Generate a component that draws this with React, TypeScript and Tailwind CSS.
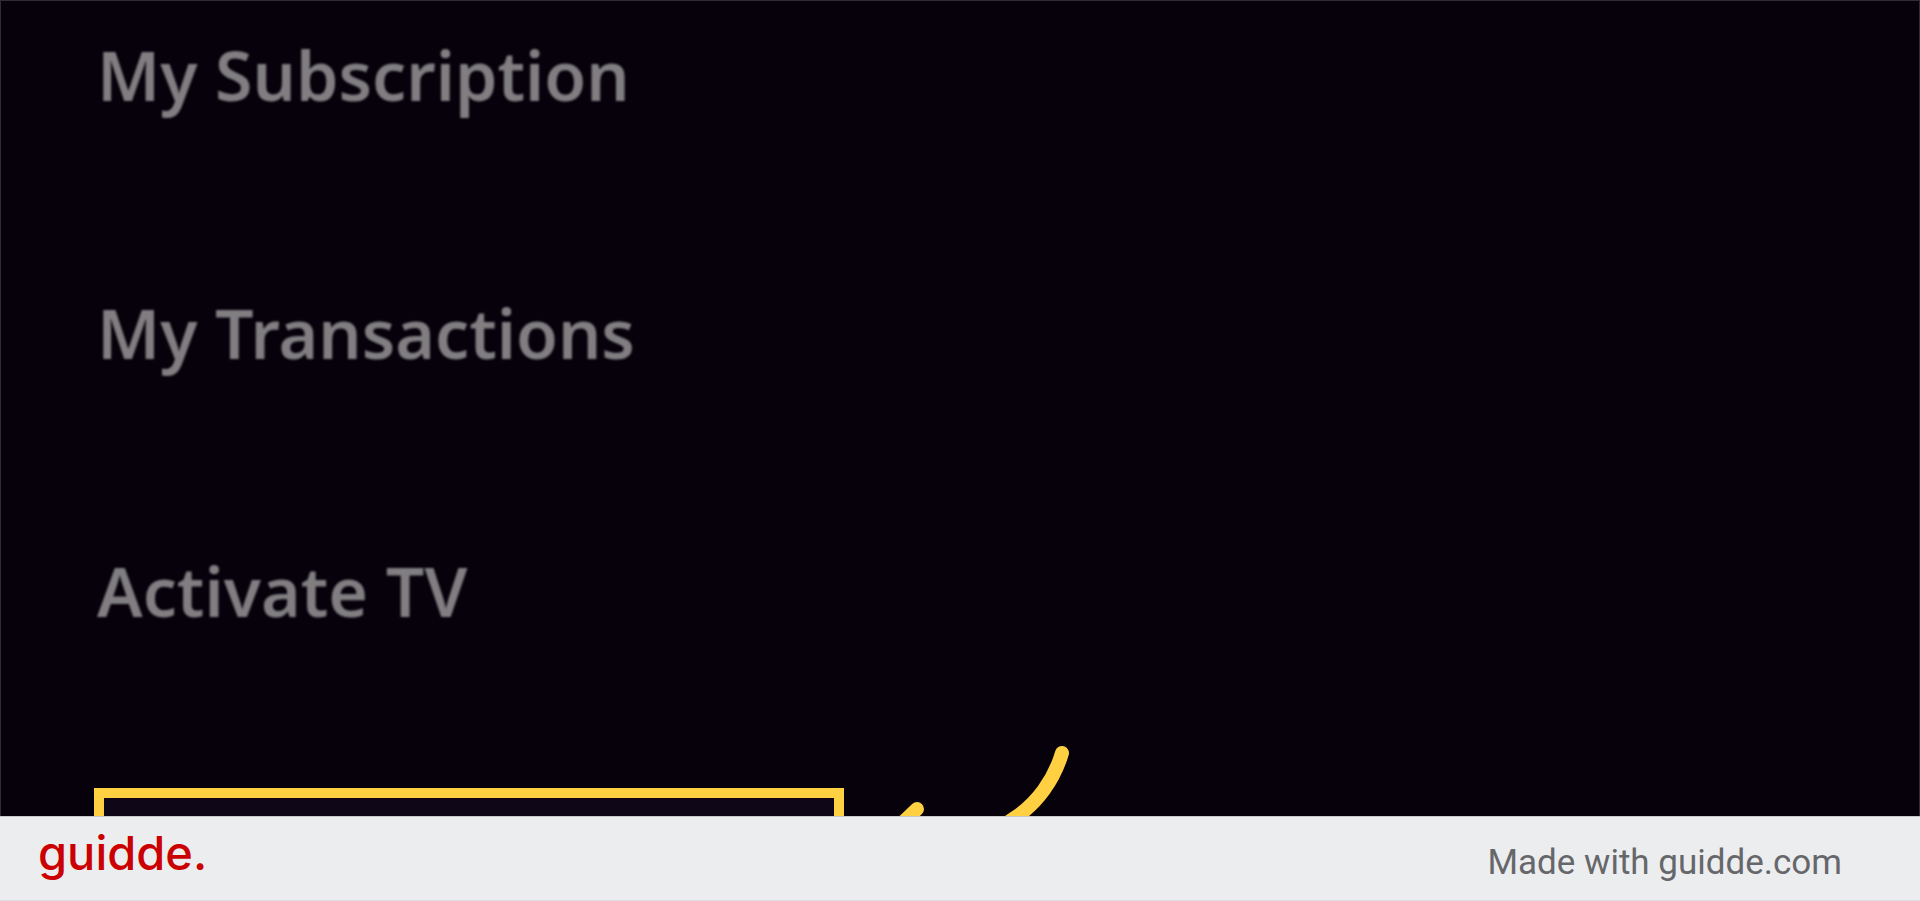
import React from 'react';

const menuItems = ['My Subscription', 'My Transactions', 'Activate TV'];

const HighlightArrow = () => (
  <svg className="-mt-[50px] h-[160px] w-[260px] shrink-0" viewBox="0 0 260 160" fill="none" stroke="#ffd142" strokeWidth="14" strokeLinecap="round" strokeLinejoin="round" aria-hidden="true">
    <path d="M218 15C210 42 193 65 172 79C146 98 96 117 24 118" />
    <path d="M73 71L24 118L76 154" />
  </svg>
);

const App: React.FC = () => {
  return (
    <div className="flex h-screen flex-col overflow-hidden bg-[#ecedef]">
      <main className="min-h-0 flex-1 overflow-hidden border-x border-t border-[#302c33] bg-[#07010c] pt-[26px]">
        <ul className="flex flex-col gap-[162px] pl-24 font-['Noto_Sans','Open_Sans',sans-serif] text-[68px] font-semibold leading-[96px] text-[#807e81] blur-[1px]">
          {menuItems.map(item => (
            <li key={item}>{item}</li>
          ))}
        </ul>

        <div className="mt-[149px] flex items-start pl-[93px]">
          <div className="h-[172px] w-[750px] shrink-0 border-10 border-[#ffd142] bg-[#0f0617]" />
          <HighlightArrow />
        </div>
      </main>

      <footer className="flex h-[85px] shrink-0 items-center justify-between border-y border-t-[#c9c8cc] border-b-[#dcdddf] bg-[#ecedef] pl-[38px] pr-[78px]">
        <span className="-mt-3 font-['Inter',sans-serif] text-[47px] font-medium leading-[60px] text-[#cb0000]">guidde.</span>
        <span className="mt-2 font-['Roboto',sans-serif] text-[35px] leading-10 text-[#66676a]">Made with guidde.com</span>
      </footer>
    </div>
  );
};

export default App;
